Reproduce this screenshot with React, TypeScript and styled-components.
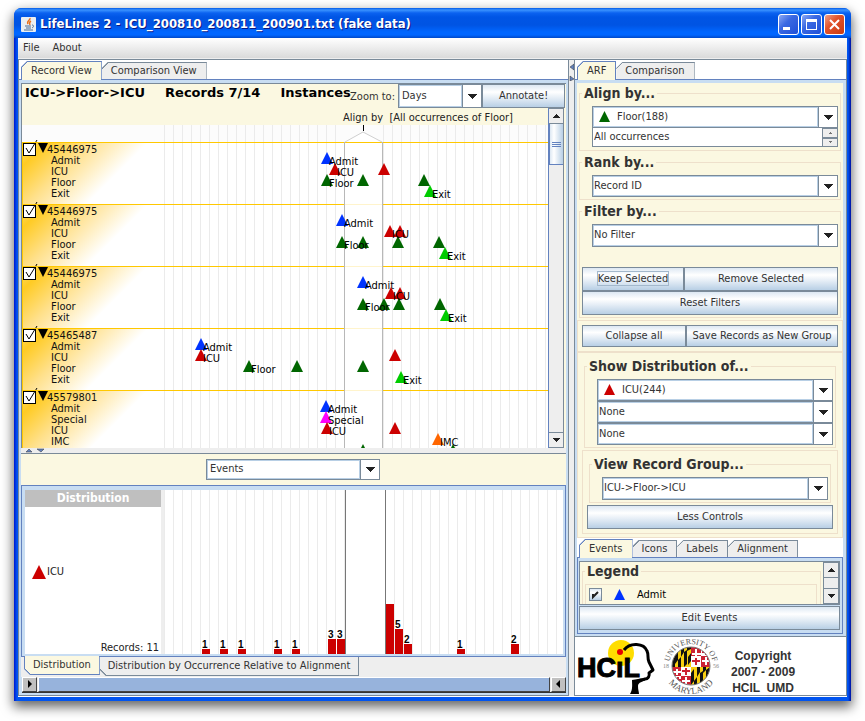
import React, { useId, useState } from "react";
import styled, { createGlobalStyle } from "styled-components";

const LINE = "#7a8a99";
const BLUE = "#6382bf";
const PALE = "#c8ddf2";
const CREAM = "#fbf8e1";
const GROOVE = "#eee0cb";
const GOLD = "#ffc800";
const SANS = '"DejaVu Sans Condensed", Tahoma, "DejaVu Sans", sans-serif';
const METAL = "linear-gradient(#dde8f3, #ffffff 32%, #e3ecf5 60%, #b8cfe5)";

const GlobalStyle = createGlobalStyle`
  *, *::before, *::after { box-sizing: border-box; }
  body { margin: 0; background: #fff; }
  body, button, select, input { font: 11px/14px ${SANS}; color: #333; }
  button { cursor: pointer; }
`;

const Desktop = styled.div`
  display: flex;
  min-height: 100vh;
  padding: 8px 14px 20px;
`;

const Frame = styled.div`
  flex: 1;
  min-width: 0;
  display: flex;
  flex-direction: column;
  border-radius: 8px 8px 0 0;
  background: linear-gradient(to right, #0019cf, #0054f0 3px, #0054f0 calc(100% - 3px), #0010a0);
  box-shadow: 0 5px 12px 1px rgba(0, 0, 0, 0.6);
`;

const TitleBar = styled.header`
  display: flex;
  align-items: center;
  gap: 4px;
  height: 30px;
  padding: 2px 6px 0 7px;
  border-radius: 7px 7px 0 0;
  background: linear-gradient(#0058e6, #3a93ff 2px, #0b62f0 5px, #0055e5 9px, #0054e3 17px, #0066ff 24px, #0066ff 27px, #0048c8);
`;

const Title = styled.h1`
  flex: 1;
  margin: 0;
  overflow: hidden;
  white-space: nowrap;
  font: bold 13px/18px "DejaVu Sans Condensed", "Trebuchet MS", sans-serif;
  color: #fff;
  text-shadow: 1px 1px 0 #0a1883;
`;

const WindowButton = styled.button<{ $close?: boolean }>`
  width: 21px;
  height: 21px;
  padding: 0;
  margin-left: -2px;
  border: 1px solid #fff;
  border-radius: 3px;
  background: ${(p) =>
    p.$close
      ? "linear-gradient(135deg, #f0a088, #e2532c 40%, #c83a10)"
      : "linear-gradient(135deg, #8ba9f5, #3a68e2 40%, #1f50d8)"};
  svg { display: block; }
`;

const Client = styled.div`
  flex: 1;
  display: flex;
  flex-direction: column;
  margin: 0 4px 4px;
  background: #fff;
`;

const MenuBar = styled.nav`
  display: flex;
  height: 22px;
  padding: 2px 0 0 5px;
  gap: 13px;
  background: linear-gradient(#ffffff, #dadada 20px, #eee 20px);
  border-bottom: 1px solid ${LINE};
`;

const MenuItem = styled.button`
  height: 15px;
  padding: 0;
  border: 0;
  background: none;
`;

const Split = styled.div`
  flex: 1;
  display: grid;
  grid-template-columns: minmax(0, 1fr) 5px 273px;
  padding-bottom: 1px;
`;

const Pane = styled.section`
  display: flex;
  flex-direction: column;
  min-width: 0;
  border: 1px solid ${LINE};
  border-top: 0;
`;

const Splitter = styled.div`
  background: #eee;
  padding-top: 3px;
  svg { display: block; }
`;

const TabStrip = styled.div`
  display: flex;
  align-items: flex-end;
  height: 20px;
  padding-left: 2px;
  background: #fff;
  border-bottom: 1px solid ${BLUE};
`;

const Tab = styled.button<{ $active?: boolean }>`
  height: ${(p) => (p.$active ? 19 : 17)}px;
  margin-bottom: ${(p) => (p.$active ? -1 : 0)}px;
  padding: 0 9px;
  border: 1px solid ${(p) => (p.$active ? BLUE : LINE)};
  border-bottom: 0;
  border-left-width: ${(p) => (p.$active ? 1 : 0)}px;
  white-space: nowrap;
  clip-path: polygon(6px 0, 100% 0, 100% 100%, 0 100%, 0 6px);
  background: linear-gradient(135deg, ${(p) => (p.$active ? BLUE : LINE)} 5px, ${(p) => (p.$active ? CREAM : "#eee")} 5px) border-box;
`;

const BottomTab = styled.button<{ $active?: boolean }>`
  height: 19px;
  margin-top: ${(p) => (p.$active ? -1 : 0)}px;
  padding: 0 8px;
  border: 1px solid ${(p) => (p.$active ? BLUE : LINE)};
  border-top: 0;
  border-left-width: ${(p) => (p.$active ? 1 : 0)}px;
  white-space: nowrap;
  clip-path: polygon(0 0, 100% 0, 100% 100%, 6px 100%, 0 calc(100% - 6px));
  background: linear-gradient(45deg, ${(p) => (p.$active ? BLUE : LINE)} 5px, ${(p) => (p.$active ? CREAM : "#eee")} 5px) border-box;
`;

const BottomTabs = styled.div`
  display: flex;
  align-items: flex-start;
  height: 21px;
  padding-left: 3px;
  background: #eee;
  border-top: 1px solid ${BLUE};
`;

const TabBody = styled.div<{ $right?: number }>`
  flex: 1;
  display: flex;
  flex-direction: column;
  padding: 3px ${(p) => p.$right ?? 2}px 2px 2px;
  background: ${PALE};
`;

const RecordPane = styled.div`
  flex: 1;
  display: flex;
  flex-direction: column;
  min-height: 0;
  border: 1px solid ${LINE};
  border-width: 1px 0 0 1px;
  background: ${CREAM};
`;

const Toolbar = styled.div`
  display: flex;
  height: 24px;
  padding-right: 1px;
`;

const Heading = styled.h2`
  flex: 1 0 0;
  display: flex;
  gap: 20px;
  min-width: 0;
  margin: 0;
  padding: 0 0 0 3px;
  white-space: nowrap;
  font: bold 13px/18px "DejaVu Sans", Verdana, sans-serif;
  color: #000;
`;

const ZoomLabel = styled.label`
  padding: 6px 3px 0 0;
`;

const SelectFrame = styled.span<{ $width?: number; $indent?: number; $height?: number }>`
  display: grid;
  grid-template-columns: minmax(0, 1fr) 19px;
  flex: none;
  ${(p) => (p.$width ? `width: ${p.$width}px;` : "")}
  height: ${(p) => p.$height ?? 22}px;
  margin-left: ${(p) => p.$indent ?? 0}px;
  border: 1px solid ${LINE};
  background: #fff;
  svg { pointer-events: none; }
`;

const NativeSelect = styled.select<{ $pad: number }>`
  grid-area: 1 / 1 / 2 / 3;
  width: 100%;
  min-width: 0;
  height: 100%;
  margin: 0;
  padding: 0 20px 1px ${(p) => p.$pad}px;
  border: 0;
  border-radius: 0;
  appearance: none;
  outline: 0;
  background: linear-gradient(#fff, #fff);
`;

const SelectEdge = styled.span`
  grid-area: 1 / 1;
  border: 1px solid #b8cfe5;
  display: flex;
  align-items: center;
  padding: 0 0 1px 5px;
  pointer-events: none;
`;

const SelectArrow = styled.span`
  grid-area: 1 / 2;
  display: flex;
  align-items: center;
  justify-content: center;
  border-left: 1px solid ${LINE};
  pointer-events: none;
`;

const PushButton = styled.button<{ $grow?: boolean; $width?: number; $height?: number }>`
  ${(p) => (p.$grow ? "flex: 1;" : "")}
  ${(p) => (p.$width ? `width: ${p.$width}px;` : "")}
  height: ${(p) => p.$height ?? 24}px;
  padding: 0;
  border: 1px solid ${LINE};
  background: ${METAL};
  white-space: nowrap;
`;

const FocusRing = styled.span`
  outline: 1px solid #a3b8cc;
`;

const Viewport = styled.div`
  flex: 1;
  display: grid;
  grid-template-columns: minmax(0, 1fr) 17px;
  min-height: 340px;
`;

const CanvasColumn = styled.div`
  display: flex;
  flex-direction: column;
  border-right: 1px solid ${BLUE};
`;

const AlignCaption = styled.p`
  height: 17px;
  margin: 0;
  padding: 3px 0 0 321px;
  white-space: pre;
  color: #222;
`;

const Records = styled.div`
  position: relative;
  flex: 1 1 0;
  overflow: hidden;
  padding-top: 17px;
  background: linear-gradient(#fcfcfc 17px, #fff 17px);
`;

const Record = styled.div`
  display: flex;
  height: 62px;
  border: 1px solid ${GOLD};
  border-width: 1px 0 0 1px;
  color: #111;
  background: linear-gradient(135deg, #ffdc6a 0, #ffcb24 16px, #ffe08a 46px, #fff 88px);
`;

const RecordCheck = styled.label`
  display: grid;
  width: 15px;
  height: 13px;
  svg { grid-area: 1 / 1; overflow: visible; pointer-events: none; }
`;

const RecordBox = styled.input`
  grid-area: 1 / 1;
  width: 13px;
  height: 13px;
  margin: 0;
  appearance: none;
  border: 1px solid #000;
  background: #fff;
`;

const Disclosure = styled.button`
  width: 9px;
  height: 11px;
  padding: 0;
  border: 0;
  background: none;
  svg { display: block; }
`;

const RecordText = styled.div`
  line-height: 11px;
  padding-top: 1px;
`;

const EventNames = styled.ul`
  margin: 0;
  padding: 0 0 0 4px;
  list-style: none;
`;

const Drawing = styled.svg`
  position: absolute;
  inset: 0;
  width: 100%;
  height: 100%;
  pointer-events: none;
  font: 11px ${SANS};
`;

const ScrollBar = styled.div`
  display: flex;
  flex-direction: column;
  width: 15px;
  background: #eee;
  border-right: 1px solid ${LINE};
`;

const ScrollButton = styled.button`
  display: flex;
  align-items: center;
  justify-content: center;
  width: 100%;
  height: 16px;
  padding: 0;
  border: 1px solid ${LINE};
  border-width: 1px 0;
  background: #eee;
`;

const Thumb = styled.div<{ $height: number }>`
  display: flex;
  flex-direction: column;
  align-items: center;
  justify-content: center;
  gap: 1px;
  height: ${(p) => p.$height}px;
  border: 1px solid ${BLUE};
  border-width: 0 0 1px 1px;
  background: linear-gradient(to right, #dde8f3, #fff 4px, #b8cfe5);
`;

const Grip = styled.i`
  width: 9px;
  height: 1px;
  background: ${BLUE};
`;

const Grow = styled.div`
  flex: 1;
`;

const Divider = styled.div`
  height: 5px;
  padding-left: 4px;
  background: #eee;
  svg { display: block; }
`;

const FilterBand = styled.div`
  display: flex;
  justify-content: center;
  height: 32px;
  padding: 5px 1px 0 0;
  border-top: 1px solid ${LINE};
  background: ${CREAM};
`;

const ChartFrame = styled.div`
  display: grid;
  grid-template-columns: 136px 3px minmax(0, 1fr);
  height: 171px;
  padding: 4px 2px 2px 3px;
  border: 1px solid ${BLUE};
  border-bottom: 0;
  background: ${PALE};
`;

const ChartLabels = styled.div`
  display: flex;
  flex-direction: column;
  background: #fff;
  color: #222;
`;

const ChartHeader = styled.h3`
  margin: 0;
  background: #bfbfbf;
  color: #fff;
  text-align: center;
  font: bold 12px/17px ${SANS};
`;

const SeriesName = styled.div`
  flex: 1;
  display: flex;
  align-items: center;
  gap: 1px;
  padding: 0 0 4px 7px;
`;

const RecordsTotal = styled.div`
  padding-right: 2px;
  text-align: right;
  line-height: 13px;
`;

const ChartGap = styled.div`
  background: #eee;
`;

const ChartArea = styled.div`
  position: relative;
  background: #fff;
  svg { font: bold 10px "Liberation Sans", Arial, sans-serif; }
`;

const HScroll = styled.div`
  display: flex;
  height: 16px;
  margin-left: 1px;
  background: #eee;
  border-bottom: 1px solid #333;
`;

const HScrollButton = styled.button`
  width: 15px;
  height: 15px;
  padding: 0;
  border: 1px solid;
  border-color: #fff #444 #444 #fff;
  background: #c0c0c0;
  svg { display: block; }
`;

const HScrollThumb = styled.div`
  flex: 1;
  margin: 0 1px;
  border: 1px solid;
  border-color: #fff #444 #444 #fff;
  background: #97b3dc;
`;

const Controls = styled.div`
  display: flex;
  flex-direction: column;
  gap: 2px;
  padding-top: 1px;
  background: ${CREAM};
`;

const Fieldset = styled.fieldset<{ $bottom?: number }>`
  min-width: 0;
  margin: 0 2px;
  padding: 4px 2px ${(p) => p.$bottom ?? 2}px;
  border: 1px solid ${GROOVE};
`;

const Legend = styled.legend`
  padding: 0 2px;
  font: bold 14px/18px ${SANS};
`;

const Group = styled.div`
  padding: 4px;
  border: 1px solid ${GROOVE};
`;

const Row = styled.div<{ $top?: number }>`
  display: flex;
  margin-top: ${(p) => p.$top ?? 0}px;
`;

const OuterGroup = styled.div`
  display: flex;
  flex-direction: column;
  gap: 2px;
  margin-top: -2px;
  padding: 4px 4px 3px;
  border: 1px solid ${GROOVE};
`;

const Spinner = styled.div`
  display: grid;
  grid-template-columns: minmax(0, 1fr) 16px;
  height: 19px;
  margin-left: 10px;
`;

const SpinnerInput = styled.input`
  width: 100%;
  padding: 0 0 0 1px;
  border: 1px solid ${LINE};
  border-top: 0;
  border-right: 0;
  outline: 0;
`;

const SpinnerButtons = styled.div`
  display: grid;
  grid-template-rows: 1fr 1fr;
`;

const SpinnerButton = styled.button`
  display: flex;
  align-items: center;
  justify-content: center;
  padding: 0;
  border: 1px solid ${LINE};
  background: #eee;
  svg { opacity: 0.6; }
`;

const EventsBody = styled.div`
  flex: 1;
  display: flex;
  flex-direction: column;
  gap: 1px;
  padding: 3px 2px 3px 1px;
  border: 1px solid ${BLUE};
  border-top: 0;
  background: ${PALE};
`;

const LegendScroll = styled.div`
  flex: 1 0 42px;
  display: grid;
  grid-template-columns: minmax(0, 1fr) 15px;
  border: 1px solid ${LINE};
`;

const LegendView = styled.div`
  height: 0;
  min-height: 100%;
  overflow: hidden;
  background: ${CREAM};
  border-right: 1px solid ${LINE};
`;

const LegendRow = styled.label`
  display: flex;
  align-items: center;
  gap: 12px;
  height: 30px;
  padding: 0 3px 9px;
  margin-right: 1px;
  border: 1px solid ${GROOVE};
  color: #000;
`;

const MetalCheck = styled.span`
  display: grid;
  input { grid-area: 1 / 1; width: 13px; height: 13px; margin: 0; appearance: none; border: 1px solid ${LINE}; background: ${METAL}; }
  svg { grid-area: 1 / 1; pointer-events: none; }
`;

const Footer = styled.footer`
  display: flex;
  align-items: center;
  gap: 5px;
  height: 59px;
  padding-left: 2px;
  border-top: 1px solid ${LINE};
  background: #fff;
  svg { flex: none; }
`;

const Copyright = styled.p`
  margin: 12px 0 0 4px;
  white-space: pre;
  text-align: center;
  font: bold 12px/16px "Liberation Sans", Arial, sans-serif;
`;

function Arrow({ up, size = 10 }: { up?: boolean; size?: number }) {
  const h = size / 2;
  return (
    <svg width={size} height={h} aria-hidden="true" shapeRendering="crispEdges">
      <path d={up ? `M0 ${h}L${h} 0L${size} ${h}Z` : `M0 0H${size}L${h} ${h}Z`} fill="#222" />
    </svg>
  );
}

function Triangle({ color, size = 12 }: { color: string; size?: number }) {
  return (
    <svg width={size} height={size} aria-hidden="true">
      <path d={`M${size / 2} 0L${size} ${size}H0Z`} fill={color} />
    </svg>
  );
}

interface PickProps {
  label: string;
  options: string[];
  id?: string;
  icon?: string;
  pad?: number;
  width?: number;
  height?: number;
  indent?: number;
}

function Pick({ label, options, id, icon, pad = 1, width, height, indent }: PickProps) {
  return (
    <SelectFrame $width={width} $height={height} $indent={indent}>
      <NativeSelect id={id} aria-label={label} $pad={icon ? 24 : pad}>
        {options.map((o) => (
          <option key={o}>{o}</option>
        ))}
      </NativeSelect>
      <SelectEdge>{icon && <Triangle color={icon} size={11} />}</SelectEdge>
      <SelectArrow>
        <Arrow />
      </SelectArrow>
    </SelectFrame>
  );
}

const COLORS: Record<string, string> = {
  Admit: "#0033ff",
  ICU: "#cc0000",
  Floor: "#006600",
  Exit: "#00cc00",
  Special: "#ff00ff",
  IMC: "#ff6600",
};

type EventLine = [name: string, ...positions: number[]];

const RECORDS: { id: string; lines: EventLine[] }[] = [
  { id: "45446975", lines: [["Admit", 305], ["ICU", 313, 362], ["Floor", 305, 341, 402], ["Exit", 408]] },
  { id: "45446975", lines: [["Admit", 320], ["ICU", 368, 378], ["Floor", 320, 341, 376, 417], ["Exit", 423]] },
  { id: "45446975", lines: [["Admit", 341], ["ICU", 369, 378], ["Floor", 341, 362, 377, 418], ["Exit", 424]] },
  { id: "45465487", lines: [["Admit", 179], ["ICU", 179, 373], ["Floor", 227, 275, 341], ["Exit", 379]] },
  { id: "45579801", lines: [["Admit", 304], ["Special", 304], ["ICU", 305, 373], ["IMC", 416], ["Floor", 341, 431]] },
];

function Timeline() {
  return (
    <Drawing aria-label="Event timelines aligned by Floor">
      <defs>
        <pattern id="days" width="9" height="10" patternUnits="userSpaceOnUse" x="142">
          <rect width="1" height="10" fill="#ebebeb" />
        </pattern>
        <pattern id="daysAfter" width="9" height="10" patternUnits="userSpaceOnUse" x="361">
          <rect width="1" height="10" fill="#ebebeb" />
        </pattern>
      </defs>
      <rect x="142" width="180" height="100%" fill="url(#days)" />
      <rect x="361" width="100%" height="100%" fill="url(#daysAfter)" />
      {RECORDS.map((r, i) => (
        <rect key={i} y={17 + 62 * i} width="100%" height="1" fill={GOLD} />
      ))}
      <path d="M323 17L341 7L360 17V2000H323Z" fill="#fff" fillOpacity="0.8" />
      <rect x="323" y="17" width="37" height="1" fill={GOLD} />
      <path d="M323 17L341 7L360 17" fill="none" stroke="#d0d0d0" />
      <rect x="322" y="17" width="1" height="100%" fill="#b8b8b8" />
      <rect x="360" y="17" width="1" height="100%" fill="#b8b8b8" />
      <rect x="341" width="1" height="6" fill="#000" />
      {RECORDS.map((r, i) =>
        r.lines.map(([name, ...xs], j) =>
          xs.map((x) => (
            <path
              key={`${i}-${j}-${x}`}
              d={`M${x} ${27 + 62 * i + 11 * j}l6 12h-12z`}
              fill={COLORS[name]}
            />
          ))
        )
      )}
      {RECORDS.map((r, i) =>
        r.lines.map(([name, x], j) =>
          j < 4 ? (
            <text key={`${i}-${j}`} x={x + 2} y={40 + 62 * i + 11 * j} fill="#000">
              {name}
            </text>
          ) : null
        )
      )}
    </Drawing>
  );
}

const BARS: [x: number, count: number, hideLabel?: boolean][] = [
  [38, 1], [56, 1], [74, 1], [110, 1], [128, 1], [164, 3], [173, 3],
  [222, 10, true], [231, 5], [240, 2], [293, 1], [347, 2],
];

function Histogram() {
  const base = 164;
  return (
    <Drawing aria-label="Distribution of ICU events">
      <defs>
        <pattern id="cols" width="9" height="10" patternUnits="userSpaceOnUse">
          <rect width="1" height="10" fill="#ebebeb" />
        </pattern>
        <pattern id="colsAfter" width="9" height="10" patternUnits="userSpaceOnUse" x="221">
          <rect width="1" height="10" fill="#ebebeb" />
        </pattern>
      </defs>
      <rect width="181" height="100%" fill="url(#cols)" />
      <rect x="221" width="100%" height="100%" fill="url(#colsAfter)" />
      <rect x="181" width="1" height="100%" fill="#777" />
      <rect x="221" width="1" height="100%" fill="#777" />
      {BARS.map(([x, n, hide]) => (
        <g key={x}>
          <rect x={x} y={base - n * 5} width="8" height={n * 5} fill="#cc0000" />
          {!hide && (
            <text x={x} y={base - n * 5 - 1} fill="#000">
              {n}
            </text>
          )}
        </g>
      ))}
    </Drawing>
  );
}

function HcilLogo() {
  return (
    <svg width="78" height="58" viewBox="0 0 78 58" role="img" aria-label="HCIL">
      <circle cx="44" cy="16" r="13" fill="#ffdd00" />
      <path
        d="M47 13C53 5 67 6 70 14C72 18 70 21 72 25L76 33L72 36C73 39 71 42 68 42C65 43 63 43 61 44"
        fill="none"
        stroke="#000"
        strokeWidth="3"
        strokeLinejoin="round"
      />
      <path d="M55 43C61 42 66 41 70 42C66 45 61 45 61 49C61 53 62 55 62 57H53C56 52 55 48 55 43Z" fill="#000" />
      <circle cx="43" cy="15" r="3" fill="#e60000" />
      <text x="0" y="40" fill="#000" stroke="#000" style={{ font: 'bold 27px "Liberation Sans", Arial, sans-serif' }}>
        HCıL
      </text>
    </svg>
  );
}

function Seal() {
  const clip = useId();
  return (
    <svg width="62" height="58" viewBox="0 0 62 58" role="img" aria-label="University of Maryland 1856">
      <defs>
        <clipPath id={clip}>
          <circle cx="31" cy="29" r="19" />
        </clipPath>
        <path id="sealTop" d="M9 29A22 22 0 0 1 53 29" />
        <path id="sealBottom" d="M3 29A28 28 0 0 0 59 29" />
      </defs>
      <g clipPath={`url(#${clip})`}>
        <rect x="11" y="9" width="40" height="40" fill="#fff" />
        <rect x="11" y="9" width="20" height="21" fill="#f8cf10" />
        <rect x="31" y="30" width="20" height="19" fill="#f8cf10" />
        <g fill="#111">
          <path d="M15 14L18 12V23L15 27ZM21 10L24 9V15L21 20ZM27 9H31V12L27 14Z" />
          <path d="M12 22L15 19V30H12ZM18 23L21 20V30H18ZM24 15L27 13V27L24 30ZM28 20L31 16V24L28 28Z" />
          <path d="M31 36L34 32V44L31 48ZM37 30H40V35L37 40ZM43 30H46V33L43 36Z" />
          <path d="M34 44L37 40V49H34ZM40 36L43 34V44L40 47ZM46 33L50 30V37L46 41Z" />
        </g>
        <g fill="#cc2233">
          <path d="M31 9H41V19H31ZM41 19H51V30H41Z" />
          <path d="M11 30H21V39H11ZM21 39H31V49H21Z" />
        </g>
        <g fill="#fff">
          <path d="M35 12h2v4h4v2h-4v2h-2v-2h-3v-2h3zM45 20h2v3h3v2h-3v3h-2v-3h-3v-2h3z" />
          <path d="M16 32h2v2h3v2h-3v2h-2v-2h-3v-2h3zM25 40h2v3h3v2h-3v2h-2v-2h-3v-2h3z" />
        </g>
        <g fill="#cc2233">
          <path d="M45 11h2v3h3v2h-3v2h-2v-2h-3v-2h3zM35 21h2v2h3v2h-3v3h-2v-3h-3v-2h3z" />
          <path d="M25 31h2v2h3v2h-3v3h-2v-3h-3v-2h3zM17 40h2v2h2v2h-2v3h-2v-3h-3v-2h3z" />
        </g>
      </g>
      <circle cx="31" cy="29" r="19" fill="none" stroke="#777" />
      <g fill="#555" style={{ font: '8px "Liberation Serif", serif' }}>
        <text textAnchor="middle">
          <textPath href="#sealTop" startOffset="50%">UNIVERSITY OF</textPath>
        </text>
        <text textAnchor="middle" style={{ fontSize: 9 }}>
          <textPath href="#sealBottom" startOffset="50%">MARYLAND</textPath>
        </text>
      </g>
      <g fill="#888" style={{ font: '6px "Liberation Serif", serif' }}>
        <text x="3" y="31">18</text>
        <text x="53" y="31">56</text>
      </g>
    </svg>
  );
}

function JavaIcon() {
  return (
    <svg width="15" height="15" viewBox="0 0 15 15" aria-hidden="true">
      <rect width="15" height="15" rx="1" fill="#e9eef2" />
      <path d="M9 1C10 3 5 4 7 7M10 4C8 5 8 6 9 8" stroke="#e8701a" strokeWidth="1.4" fill="none" />
      <path d="M4 9h6M5 11h5M3 13h9M11 8c2 0 2 2 0 3" stroke="#4a6c94" fill="none" />
    </svg>
  );
}

function RecordRow({ id, lines }: { id: string; lines: EventLine[] }) {
  const [checked, setChecked] = useState(true);
  return (
    <Record>
      <RecordCheck>
        <RecordBox type="checkbox" aria-label={`Record ${id}`} checked={checked} onChange={() => setChecked(!checked)} />
        {checked && (
          <svg width="15" height="13" aria-hidden="true">
            <path d="M3 5L6 10L14 -3" fill="none" stroke="#000" />
          </svg>
        )}
      </RecordCheck>
      <Disclosure aria-label={`Collapse ${id}`}>
        <svg width="10" height="11" aria-hidden="true">
          <path d="M0 0H10L5 10Z" fill="#000" />
        </svg>
      </Disclosure>
      <RecordText>
        {id}
        <EventNames>
          {lines.slice(0, 4).map(([name]) => (
            <li key={name}>{name}</li>
          ))}
        </EventNames>
      </RecordText>
    </Record>
  );
}

function RecordView() {
  return (
    <Pane>
      <TabStrip role="tablist">
        <Tab role="tab" aria-selected $active>Record View</Tab>
        <Tab role="tab">Comparison View</Tab>
      </TabStrip>
      <TabBody>
        <RecordPane>
          <Toolbar>
            <Heading>
              <span>ICU-&gt;Floor-&gt;ICU</span>
              <span>Records 7/14</span>
              <span>Instances</span>
            </Heading>
            <ZoomLabel htmlFor="zoom">Zoom to:</ZoomLabel>
            <Pick id="zoom" label="Zoom to" options={["Days", "Weeks", "Months"]} width={84} height={24} pad={3} />
            <PushButton $width={83}>Annotate!</PushButton>
          </Toolbar>
          <Viewport>
            <CanvasColumn>
              <AlignCaption>{"Align by  [All occurrences of Floor]"}</AlignCaption>
              <Records>
                {RECORDS.map((r, i) => (
                  <RecordRow key={i} {...r} />
                ))}
                <Timeline />
              </Records>
            </CanvasColumn>
            <ScrollBar>
              <ScrollButton aria-label="Scroll up"><Arrow up size={8} /></ScrollButton>
              <Thumb $height={41}><Grip /><Grip /><Grip /></Thumb>
              <Grow />
              <ScrollButton aria-label="Scroll down"><Arrow size={8} /></ScrollButton>
            </ScrollBar>
          </Viewport>
        </RecordPane>
        <Divider>
          <svg width="20" height="5" aria-hidden="true">
            <path d="M1 4L4 1L7 4ZM12 1H19L16 4Z" fill={BLUE} stroke="#333" strokeWidth="0.5" />
          </svg>
        </Divider>
        <FilterBand>
          <Pick label="Distribution of" options={["Events", "Records"]} width={174} height={21} pad={3} />
        </FilterBand>
        <ChartFrame>
          <ChartLabels>
            <ChartHeader>Distribution</ChartHeader>
            <SeriesName><Triangle color="#cc0000" size={14} />ICU</SeriesName>
            <RecordsTotal>Records: 11</RecordsTotal>
          </ChartLabels>
          <ChartGap />
          <ChartArea><Histogram /></ChartArea>
        </ChartFrame>
        <BottomTabs role="tablist">
          <BottomTab role="tab" aria-selected $active>Distribution</BottomTab>
          <BottomTab role="tab">Distribution by Occurrence Relative to Alignment</BottomTab>
        </BottomTabs>
        <HScroll>
          <HScrollButton aria-label="Scroll start">
            <svg width="13" height="13" aria-hidden="true"><path d="M5 2V10L9 6Z" /></svg>
          </HScrollButton>
          <HScrollThumb />
          <HScrollButton aria-label="Scroll end">
            <svg width="13" height="13" aria-hidden="true"><path d="M8 2V10L4 6Z" /></svg>
          </HScrollButton>
        </HScroll>
      </TabBody>
    </Pane>
  );
}

function ControlPanel() {
  return (
    <Pane>
      <TabStrip role="tablist">
        <Tab role="tab" aria-selected $active>ARF</Tab>
        <Tab role="tab">Comparison</Tab>
      </TabStrip>
      <TabBody $right={3}>
        <Controls>
          <Fieldset $bottom={3}>
            <Legend>Align by...</Legend>
            <Pick label="Align by" options={["Floor(188)"]} icon="#006600" indent={10} />
            <Spinner>
              <SpinnerInput aria-label="Occurrences" defaultValue="All occurrences" />
              <SpinnerButtons>
                <SpinnerButton aria-label="Next"><Arrow up size={4} /></SpinnerButton>
                <SpinnerButton aria-label="Previous"><Arrow size={4} /></SpinnerButton>
              </SpinnerButtons>
            </Spinner>
          </Fieldset>
          <Fieldset>
            <Legend>Rank by...</Legend>
            <Pick label="Rank by" options={["Record ID"]} indent={10} />
          </Fieldset>
          <Fieldset>
            <Legend>Filter by...</Legend>
            <Pick label="Filter by" options={["No Filter"]} indent={10} height={23} />
            <Row $top={20}>
              <PushButton $width={102}><FocusRing>Keep Selected</FocusRing></PushButton>
              <PushButton $grow>Remove Selected</PushButton>
            </Row>
            <Row><PushButton $grow>Reset Filters</PushButton></Row>
          </Fieldset>
          <Group>
            <Row>
              <PushButton $width={104} $height={22}>Collapse all</PushButton>
              <PushButton $grow $height={22}>Save Records as New Group</PushButton>
            </Row>
          </Group>
          <OuterGroup>
            <Fieldset>
              <Legend>Show Distribution of...</Legend>
              <Pick label="First distribution" options={["ICU(244)"]} icon="#cc0000" indent={10} />
              <Pick label="Second distribution" options={["None"]} indent={10} />
              <Pick label="Third distribution" options={["None"]} indent={10} />
            </Fieldset>
            <Group>
              <Fieldset>
                <Legend>View Record Group...</Legend>
                <Pick label="View record group" options={["ICU->Floor->ICU"]} indent={10} height={23} />
              </Fieldset>
              <Row $top={2}><PushButton $grow>Less Controls</PushButton></Row>
            </Group>
          </OuterGroup>
        </Controls>
        <TabStrip role="tablist">
          <Tab role="tab" aria-selected $active>Events</Tab>
          <Tab role="tab">Icons</Tab>
          <Tab role="tab">Labels</Tab>
          <Tab role="tab">Alignment</Tab>
        </TabStrip>
        <EventsBody>
          <LegendScroll>
            <LegendView>
              <Fieldset>
                <Legend>Legend</Legend>
                <LegendRow>
                  <MetalCheck>
                    <input type="checkbox" defaultChecked />
                    <svg width="13" height="13" aria-hidden="true">
                      <path d="M4 6V9L9 4" fill="none" stroke="#222" strokeWidth="2" />
                    </svg>
                  </MetalCheck>
                  <Triangle color="#0033ff" size={11} />
                  Admit
                </LegendRow>
              </Fieldset>
            </LegendView>
            <ScrollBar>
              <ScrollButton aria-label="Scroll up"><Arrow up size={8} /></ScrollButton>
              <Grow />
              <ScrollButton aria-label="Scroll down"><Arrow size={8} /></ScrollButton>
            </ScrollBar>
          </LegendScroll>
          <PushButton>Edit Events</PushButton>
        </EventsBody>
      </TabBody>
      <Footer>
        <HcilLogo />
        <Seal />
        <Copyright>{"Copyright\n2007 - 2009\nHCIL  UMD"}</Copyright>
      </Footer>
    </Pane>
  );
}

export default function App() {
  return (
    <Desktop>
      <GlobalStyle />
      <Frame>
        <TitleBar>
          <JavaIcon />
          <Title>LifeLines 2 - ICU_200810_200811_200901.txt (fake data)</Title>
          <WindowButton aria-label="Minimize">
            <svg width="19" height="19"><path d="M4 12h7v3H4z" fill="#fff" /></svg>
          </WindowButton>
          <WindowButton aria-label="Maximize">
            <svg width="19" height="19"><path d="M4 4h11v11H4zM5 7v7h9V7z" fill="#fff" fillRule="evenodd" /></svg>
          </WindowButton>
          <WindowButton aria-label="Close" $close>
            <svg width="19" height="19"><path d="M5 5l9 9M14 5l-9 9" stroke="#fff" strokeWidth="2" /></svg>
          </WindowButton>
        </TitleBar>
        <Client>
          <MenuBar>
            <MenuItem>File</MenuItem>
            <MenuItem>About</MenuItem>
          </MenuBar>
          <Split>
            <RecordView />
            <Splitter>
              <svg width="5" height="18" aria-hidden="true">
                <path d="M5 1V7L1 4ZM1 13V18L5 16Z" fill={BLUE} stroke="#333" strokeWidth="0.5" />
              </svg>
            </Splitter>
            <ControlPanel />
          </Split>
        </Client>
      </Frame>
    </Desktop>
  );
}
